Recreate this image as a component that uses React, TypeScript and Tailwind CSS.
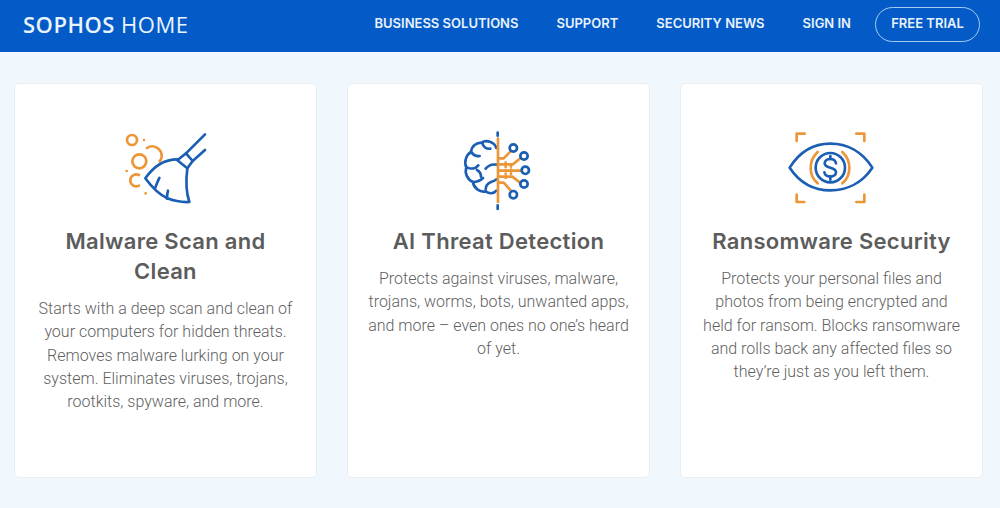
import React from "react"

const navLinks = ["BUSINESS SOLUTIONS", "SUPPORT", "SECURITY NEWS", "SIGN IN"]

const BLUE = "#1a5fb4"
const ORANGE = "#ec9638"

const BroomIcon = () => (
    <svg viewBox="0 0 330 285" width={110} height={95} fill="none" strokeWidth={8} strokeLinecap="round" strokeLinejoin="round">
        <g stroke={ORANGE}>
            <circle cx={63} cy={60} r={15} />
            <circle cx={85} cy={124} r={21} />
            <path d="M108 84c20-14 46 4 44 26-1 6-3 10-6 14" />
            <path d="M84 165c-12-6-28 4-26 18 1 12 14 20 26 14" />
        </g>
        <g fill={ORANGE} stroke="none">
            <circle cx={99} cy={60} r={4} />
            <circle cx={47} cy={153} r={4} />
            <circle cx={104} cy={220} r={4} />
        </g>
        <g stroke={BLUE}>
            <path d="M282 43l-57 57" />
            <path d="M282 90l-37 33" />
            <path d="M225 100l20 23-16 22-30-24z" />
            <path d="M199 118c-40 0-72 22-96 57 22 30 44 50 66 60 20 8 44 12 66 11-10-30-10-70-6-101" />
            <path d="M132 205c4-10 8-22 13-31" />
            <path d="M168 236c0-8 0-16 3-24" />
        </g>
    </svg>
)

const BrainIcon = () => (
    <svg viewBox="0 0 300 285" width={100} height={95} fill="none" strokeWidth={8} strokeLinecap="round" strokeLinejoin="round">
        <g stroke={BLUE}>
            <path d="M146 38v9M146 256v11" />
            <path d="M142 84c-6-18-30-26-44-16-16 0-30 10-32 28-14 8-22 30-14 46-6 18 4 38 20 44 2 18 20 32 38 28 10 8 24 8 32-2" />
            <path d="M100 70c2 10 12 18 24 16" />
            <path d="M68 98c6 8 14 12 24 10" />
            <path d="M54 142c12 6 26 4 34-6" />
            <path d="M84 150c8 4 12 12 12 20" />
            <path d="M142 134c-12-2-24 2-32 12" />
            <path d="M72 186c12 0 22-4 30-12" />
            <path d="M110 208c0-10 6-18 16-22 6-2 12-4 16-8" />
        </g>
        <path d="M147 56v190" stroke={ORANGE} strokeWidth={8} />
        <g stroke={ORANGE}>
            <path d="M150 115h14l20-20" />
            <path d="M150 133h42l20-17" />
            <path d="M150 152h66" />
            <path d="M150 170h40l22 17" />
            <path d="M150 188h14l20 22" />
            <path d="M170 128v46M186 138v28" strokeDasharray="2 9" />
        </g>
        <g stroke={BLUE} fill="#fff">
            <circle cx={193} cy={84} r={11} />
            <circle cx={225} cy={108} r={11} />
            <circle cx={229} cy={151} r={11} />
            <circle cx={225} cy={192} r={11} />
            <circle cx={193} cy={224} r={11} />
        </g>
    </svg>
)

const EyeIcon = () => (
    <svg viewBox="0 0 315 285" width={105} height={95} fill="none" strokeWidth={8} strokeLinecap="round" strokeLinejoin="round">
        <g stroke={ORANGE}>
            <path d="M53 63V41h24M232 41h24v22M53 224v22h23M256 224v22h-24" />
            <path d="M116 96c-28 26-28 70 0 94" />
            <path d="M190 96c28 26 28 70 0 94" />
        </g>
        <g stroke={BLUE}>
            <path d="M32 143c30-48 72-72 122-72s96 24 126 72c-30 45-76 68-126 68s-92-23-122-68z" />
            <circle cx={154} cy={143} r={44} />
            <path d="M171 130c-2-9-9-13-17-13-9 0-17 5-17 13 0 18 34 9 34 27 0 8-8 13-17 13-8 0-16-4-18-13" />
            <path d="M154 108v9M154 170v9" />
        </g>
    </svg>
)

const cards = [
    {
        icon: <BroomIcon />,
        title: "Malware Scan and Clean",
        body: "Starts with a deep scan and clean of your computers for hidden threats. Removes malware lurking on your system. Eliminates viruses, trojans, rootkits, spyware, and more.",
    },
    {
        icon: <BrainIcon />,
        title: "AI Threat Detection",
        body: "Protects against viruses, malware, trojans, worms, bots, unwanted apps, and more – even ones no one’s heard of yet.",
    },
    {
        icon: <EyeIcon />,
        title: "Ransomware Security",
        body: "Protects your personal files and photos from being encrypted and held for ransom. Blocks ransomware and rolls back any affected files so they’re just as you left them.",
    },
]

const App = () => {
    return (
        <div className="h-[508px] w-[1000px] overflow-hidden bg-[#f0f7fd] font-['Inter',sans-serif]">
            <header className="flex h-[52px] items-center justify-between bg-[#045bc7] pb-[4px] pl-[23px] pr-[20px] text-white">
                <div className="font-['Open_Sans',sans-serif] text-[22px] leading-[28px] tracking-[0.5px] text-[#eaf4fd]">
                    <span className="font-semibold">SOPHOS</span> <span className="font-medium">HOME</span>
                </div>
                <nav className="flex items-center gap-[38px] text-[13px] font-semibold text-[#e8f2fc]">
                    {navLinks.map((link) => (
                        <a key={link} href="#">{link}</a>
                    ))}
                    <a href="#" className="-ml-[14px] flex h-[35px] w-[105px] items-center justify-center rounded-full border border-[#a5cdf3]">
                        FREE TRIAL
                    </a>
                </nav>
            </header>

            <main className="flex gap-[30px] pl-[14px] pt-[31px]">
                {cards.map((card) => (
                    <div
                        key={card.title}
                        className="flex h-[395px] w-[303px] flex-col items-center rounded-[5px] border border-[#e9eef2] bg-white px-[20px] pt-[36px] text-center"
                    >
                        {card.icon}
                        <h2 className="mt-[11px] text-[22px] font-semibold leading-[30px] tracking-[0.3px] text-[#5c5c5c]">
                            {card.title}
                        </h2>
                        <p className="mt-[11px] font-['Roboto',sans-serif] text-[16px] font-light leading-[23.3px] text-[#5f5f5f]">
                            {card.body}
                        </p>
                    </div>
                ))}
            </main>
        </div>
    )
}

export default App
